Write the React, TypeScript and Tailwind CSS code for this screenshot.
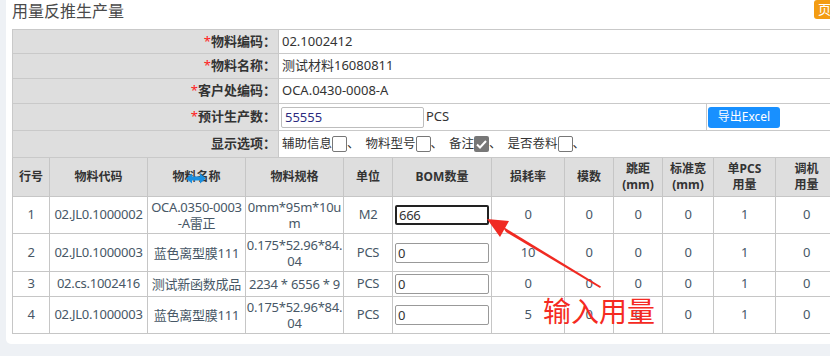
import React from 'react';

const font = "font-['Noto_Sans','Noto_Sans_CJK_SC',sans-serif]";

const Label: React.FC<{ text: string; req?: boolean }> = ({ text, req }) => (
  <div className="bg-[#dedede] border-r border-b border-[#c9c9c9] flex items-center justify-end pr-[2px] text-[13px] font-bold text-[#333]">
    {req && <span className="text-[#ff1a1a] font-normal">*</span>}
    {text}：
  </div>
);

const Box: React.FC<{ checked?: boolean }> = ({ checked }) =>
  checked ? (
    <span className="inline-flex w-[15px] h-[16px] rounded-[2px] bg-[#777] items-center justify-center">
      <svg width="11" height="9" viewBox="0 0 11 9">
        <path d="M1 4.5 L4 7.5 L10 1" fill="none" stroke="#fff" strokeWidth="2" />
      </svg>
    </span>
  ) : (
    <span className="inline-block w-[15px] h-[16px] rounded-[2px] border border-[#777] bg-white" />
  );

const Option: React.FC<{ text: string; checked?: boolean }> = ({ text, checked }) => (
  <span className="inline-flex items-center mr-[6px]">
    <span>{text}</span>
    <Box checked={checked} />
    <span>、</span>
  </span>
);

const headers: React.ReactNode[] = [
  '行号',
  '物料代码',
  '物料名称',
  '物料规格',
  '单位',
  'BOM数量',
  '损耗率',
  '模数',
  <>跳距<br />(mm)</>,
  <>标准宽<br />(mm)</>,
  <>单PCS<br />用量</>,
  <>调机<br />用量</>,
];

type Row = {
  no: string;
  code: string;
  name: React.ReactNode;
  spec: React.ReactNode;
  unit: string;
  bom: string;
  loss: string;
  focused?: boolean;
};

const rows: Row[] = [
  { no: '1', code: '02.JL0.1000002', name: <>OCA.0350-0003<br />-A雷正</>, spec: <>0mm*95m*10u<br />m</>, unit: 'M2', bom: '666', loss: '0', focused: true },
  { no: '2', code: '02.JL0.1000003', name: '蓝色离型膜111', spec: <>0.175*52.96*84.<br />04</>, unit: 'PCS', bom: '0', loss: '10' },
  { no: '3', code: '02.cs.1002416', name: '测试新函数成品', spec: '2234 * 6556 * 9', unit: 'PCS', bom: '0', loss: '0' },
  { no: '4', code: '02.JL0.1000003', name: '蓝色离型膜111', spec: <>0.175*52.96*84.<br />04</>, unit: 'PCS', bom: '0', loss: '5' },
];

const cell = 'border-r border-b border-[#c6c6c6] flex items-center justify-center text-center whitespace-nowrap';

export default function App() {
  return (
    <div className={`relative w-[830px] h-[356px] overflow-hidden bg-[#eef1f5] ${font}`}>
      <div className="ml-[6px] h-[344px] bg-white rounded-bl-[5px] pl-[6px] overflow-hidden">
        <div className="w-[826px] h-[29px] flex justify-between items-start">
          <h1 className="text-[16px] leading-[22px] text-[#4a4a4a] font-normal">用量反推生产量</h1>
          <button className="h-[19px] w-[24px] rounded-[3px] bg-[#f39c12] text-white text-[13px] leading-[19px] pl-[4px] text-left overflow-hidden whitespace-nowrap">
            页面
          </button>
        </div>

        <div className="w-[826px] grid grid-cols-[266px_428px_132px] grid-rows-[24px_25px_25px_27px_27px] border-l border-t border-[#c9c9c9] text-[13px] text-[#333]">
          <Label text="物料编码" req />
          <div className="col-span-2 border-b border-[#c9c9c9] flex items-center pl-[3px]">02.1002412</div>
          <Label text="物料名称" req />
          <div className="col-span-2 border-b border-[#c9c9c9] flex items-center pl-[3px]">测试材料16080811</div>
          <Label text="客户处编码" req />
          <div className="col-span-2 border-b border-[#c9c9c9] flex items-center pl-[3px]">OCA.0430-0008-A</div>
          <Label text="预计生产数" req />
          <div className="border-r border-b border-[#c9c9c9] flex items-center pl-[2px]">
            <input
              readOnly
              value="55555"
              className="w-[143px] h-[21px] border border-[#bdbdbd] rounded-[2px] px-[3px] text-[13px] text-[#2b2b80] outline-none"
            />
            <span className="ml-[2px]">PCS</span>
          </div>
          <div className="border-b border-[#c9c9c9] flex items-center pl-[1px]">
            <button className="h-[21px] w-[72px] rounded-[3px] bg-[#1890ff] text-white text-[12px]">导出Excel</button>
          </div>
          <Label text="显示选项" />
          <div className="col-span-2 border-b border-[#c9c9c9] flex items-center pl-[3px] text-[12.5px]">
            <Option text="辅助信息" />
            <Option text="物料型号" />
            <Option text="备注" checked />
            <Option text="是否卷料" />
          </div>
        </div>

        <div className="w-[826px] grid grid-cols-[37px_98px_98px_98px_49px_99px_73px_49px_49px_51px_62px_62px] grid-rows-[39px_37px_38px_25px_37px] border-l border-[#c6c6c6] text-[13px] tracking-[-0.25px] text-[#475766]">
          {headers.map((h, i) => (
            <div key={i} className={`${cell} relative bg-[#dedede] text-[12px] leading-[16px] font-bold tracking-normal text-[#333]`}>
              {h}
              {i === 2 && (
                <svg className="absolute left-[38px] top-[15px]" width="20" height="11" viewBox="0 0 20 11">
                  <path d="M0 5.5 L6 0.5 L6 3.5 L14 3.5 L14 0.5 L20 5.5 L14 10.5 L14 7.5 L6 7.5 L6 10.5 Z" fill="#1a8fe0" />
                </svg>
              )}
            </div>
          ))}
          {rows.map((r) => (
            <React.Fragment key={r.no}>
              <div className={cell}>{r.no}</div>
              <div className={cell}>{r.code}</div>
              <div className={`${cell} leading-[16px]`}>{r.name}</div>
              <div className={`${cell} leading-[16px]`}>{r.spec}</div>
              <div className={cell}>{r.unit}</div>
              <div className="border-r border-b border-[#c6c6c6] flex items-center pl-[2px]">
                <input
                  readOnly
                  value={r.bom}
                  className={`w-[94px] h-[20px] rounded-[2px] px-[2px] text-[13px] text-[#333] outline-none ${
                    r.focused ? 'border-2 border-[#222]' : 'border border-[#999]'
                  }`}
                />
              </div>
              <div className={cell}>{r.loss}</div>
              <div className={cell}>0</div>
              <div className={cell}>0</div>
              <div className={cell}>0</div>
              <div className={cell}>1</div>
              <div className={cell}>0</div>
            </React.Fragment>
          ))}
        </div>
      </div>

      <svg className="absolute left-0 top-0 pointer-events-none" width="830" height="356" viewBox="0 0 830 356">
        <polygon points="487,219 509,221 500,237" fill="#f02a22" />
        <polygon points="502,226 506,232 600,288 601,286.5" fill="#f02a22" />
      </svg>
      <div className="absolute left-[543px] top-[294px] text-[28px] leading-[34px] text-[#f52a22] pointer-events-none">
        输入用量
      </div>
    </div>
  );
}
